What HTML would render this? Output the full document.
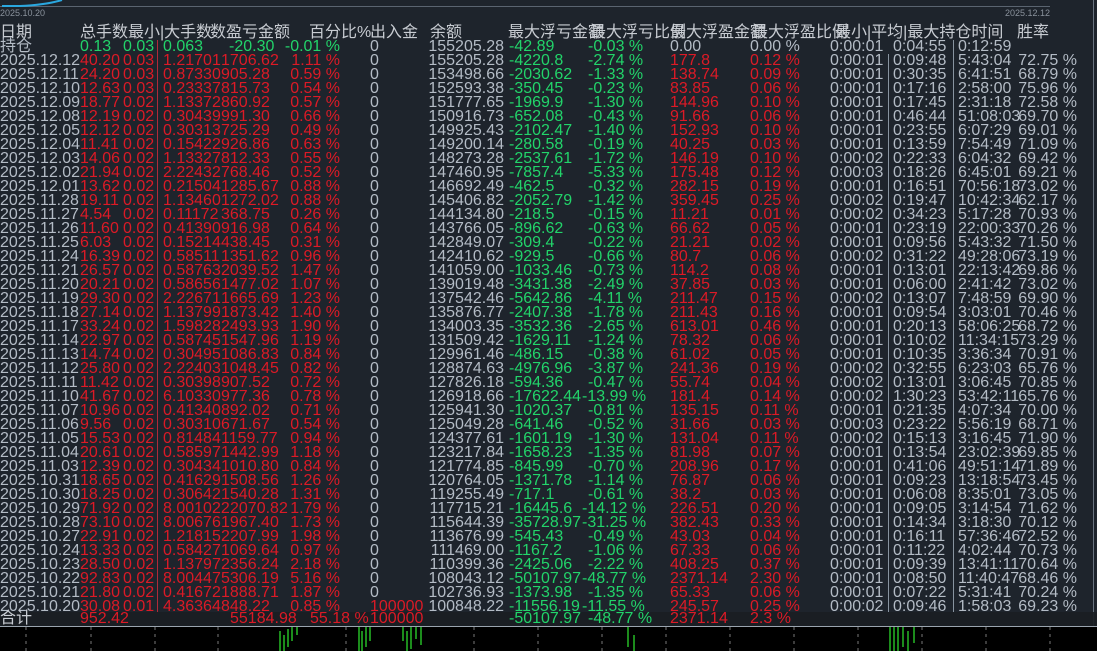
<!DOCTYPE html>
<html><head><meta charset="utf-8">
<style>
*{margin:0;padding:0;box-sizing:border-box}
body{width:1097px;height:651px;overflow:hidden;background:#1e242c;font-family:"Liberation Sans","Noto Sans CJK SC",sans-serif;font-size:16px;position:relative}
.r{position:absolute;left:0;width:1097px;height:14px;line-height:14px;white-space:nowrap}
.r span{position:absolute;top:0}
.d{left:0;color:#b4bcc6}
.t{left:80px}.m{left:123px}.c{left:163px}.p{left:221px}
.q{right:757px}.io{left:370px;color:#b4bcc6}.b{right:593px;color:#b4bcc6}
.l{left:509px;color:#22d46a}.lp{left:588px;color:#22d46a}
.g{left:670px}.gp{left:750px}
.x1{left:830px;color:#b4bcc6}.x2{left:893px;color:#b4bcc6}.x3{left:958px;color:#b4bcc6}.w{right:20px;color:#b4bcc6}
.rd span.t,.rd span.m,.rd span.c,.rd span.p,.rd span.q,.rd span.g,.rd span.gp{color:#dc1a26}
.hd span{color:#c8ccd2}
</style></head><body>
<div style="position:absolute;left:0;top:6px;width:1050px;height:1px;background:#5a6470"></div>
<svg style="position:absolute;left:0;top:0" width="80" height="8"><path d="M2 6 L20 6 Q45 5 62 0" stroke="#2aa8e0" stroke-width="2" fill="none"/></svg>
<div style="position:absolute;left:0;top:8px;font-size:9px;color:#8a929c">2025.10.20</div>
<div style="position:absolute;left:1005px;top:8px;font-size:9px;color:#8a929c">2025.12.12</div>
<div style="position:absolute;left:1093px;top:0;width:1px;height:626px;background:#6a7480"></div>
<div style="position:absolute;left:157px;top:40px;width:1px;height:572px;background:#b02a38"></div>
<div style="position:absolute;left:888px;top:54px;width:1px;height:558px;background:#8894a0"></div>
<div style="position:absolute;left:953px;top:40px;width:1px;height:572px;background:#8894a0"></div>

<div class="r hd" style="top:26px"><span style="left:0">日期</span><span style="left:80px">总手数</span><span style="left:128px">最小|大手数</span><span style="left:210px">数盈亏金额</span><span style="left:309px">百分比%</span><span style="left:370px">出入金</span><span style="left:430px">余额</span><span style="left:508px">最大浮亏金额</span><span style="left:590px">最大浮亏比例</span><span style="left:670px">最大浮盈金额</span><span style="left:752px">最大浮盈比例</span><span style="left:835px">最小|平均|最大持仓时间</span><span style="left:1017px">胜率</span></div>
<div class="r" style="top:40px;color:#22d46a"><span class="d">持仓</span><span class="t">0.13</span><span class="m">0.03</span><span class="c">0.063</span><span class="p" style="left:229px">-20.30</span><span class="q">-0.01 %</span><span class="io">0</span><span class="b">155205.28</span><span class="l">-42.89</span><span class="lp">-0.03 %</span><span class="g" style="color:#b4bcc6">0.00</span><span class="gp" style="color:#b4bcc6">0.00 %</span><span class="x1">0:00:01</span><span class="x2">0:04:55</span><span class="x3">0:12:59</span></div>

<div class="r rd" style="top:54px"><span class="d">2025.12.12</span><span class="t">40.20</span><span class="m">0.03</span><span class="c">1.21701</span><span class="p">1706.62</span><span class="q">1.11 %</span><span class="io">0</span><span class="b">155205.28</span><span class="l">-4220.8</span><span class="lp">-2.74 %</span><span class="g">177.8</span><span class="gp">0.12 %</span><span class="x1">0:00:01</span><span class="x2">0:09:48</span><span class="x3">5:43:04</span><span class="w">72.75 %</span></div>
<div class="r rd" style="top:68px"><span class="d">2025.12.11</span><span class="t">24.20</span><span class="m">0.03</span><span class="c">0.87330</span><span class="p">905.28</span><span class="q">0.59 %</span><span class="io">0</span><span class="b">153498.66</span><span class="l">-2030.62</span><span class="lp">-1.33 %</span><span class="g">138.74</span><span class="gp">0.09 %</span><span class="x1">0:00:01</span><span class="x2">0:30:35</span><span class="x3">6:41:51</span><span class="w">68.79 %</span></div>
<div class="r rd" style="top:82px"><span class="d">2025.12.10</span><span class="t">12.63</span><span class="m">0.03</span><span class="c">0.23337</span><span class="p">815.73</span><span class="q">0.54 %</span><span class="io">0</span><span class="b">152593.38</span><span class="l">-350.45</span><span class="lp">-0.23 %</span><span class="g">83.85</span><span class="gp">0.06 %</span><span class="x1">0:00:01</span><span class="x2">0:17:16</span><span class="x3">2:58:00</span><span class="w">75.96 %</span></div>
<div class="r rd" style="top:96px"><span class="d">2025.12.09</span><span class="t">18.77</span><span class="m">0.02</span><span class="c">1.13372</span><span class="p">860.92</span><span class="q">0.57 %</span><span class="io">0</span><span class="b">151777.65</span><span class="l">-1969.9</span><span class="lp">-1.30 %</span><span class="g">144.96</span><span class="gp">0.10 %</span><span class="x1">0:00:01</span><span class="x2">0:17:45</span><span class="x3">2:31:18</span><span class="w">72.58 %</span></div>
<div class="r rd" style="top:110px"><span class="d">2025.12.08</span><span class="t">12.19</span><span class="m">0.02</span><span class="c">0.30439</span><span class="p">991.30</span><span class="q">0.66 %</span><span class="io">0</span><span class="b">150916.73</span><span class="l">-652.08</span><span class="lp">-0.43 %</span><span class="g">91.66</span><span class="gp">0.06 %</span><span class="x1">0:00:01</span><span class="x2">0:46:44</span><span class="x3">51:08:03</span><span class="w">69.70 %</span></div>
<div class="r rd" style="top:124px"><span class="d">2025.12.05</span><span class="t">12.12</span><span class="m">0.02</span><span class="c">0.30313</span><span class="p">725.29</span><span class="q">0.49 %</span><span class="io">0</span><span class="b">149925.43</span><span class="l">-2102.47</span><span class="lp">-1.40 %</span><span class="g">152.93</span><span class="gp">0.10 %</span><span class="x1">0:00:01</span><span class="x2">0:23:55</span><span class="x3">6:07:29</span><span class="w">69.01 %</span></div>
<div class="r rd" style="top:138px"><span class="d">2025.12.04</span><span class="t">11.41</span><span class="m">0.02</span><span class="c">0.15422</span><span class="p">926.86</span><span class="q">0.63 %</span><span class="io">0</span><span class="b">149200.14</span><span class="l">-280.58</span><span class="lp">-0.19 %</span><span class="g">40.25</span><span class="gp">0.03 %</span><span class="x1">0:00:01</span><span class="x2">0:13:59</span><span class="x3">7:54:49</span><span class="w">71.09 %</span></div>
<div class="r rd" style="top:152px"><span class="d">2025.12.03</span><span class="t">14.06</span><span class="m">0.02</span><span class="c">1.13327</span><span class="p">812.33</span><span class="q">0.55 %</span><span class="io">0</span><span class="b">148273.28</span><span class="l">-2537.61</span><span class="lp">-1.72 %</span><span class="g">146.19</span><span class="gp">0.10 %</span><span class="x1">0:00:02</span><span class="x2">0:22:33</span><span class="x3">6:04:32</span><span class="w">69.42 %</span></div>
<div class="r rd" style="top:166px"><span class="d">2025.12.02</span><span class="t">21.94</span><span class="m">0.02</span><span class="c">2.22432</span><span class="p">768.46</span><span class="q">0.52 %</span><span class="io">0</span><span class="b">147460.95</span><span class="l">-7857.4</span><span class="lp">-5.33 %</span><span class="g">175.48</span><span class="gp">0.12 %</span><span class="x1">0:00:03</span><span class="x2">0:18:26</span><span class="x3">6:45:01</span><span class="w">69.21 %</span></div>
<div class="r rd" style="top:180px"><span class="d">2025.12.01</span><span class="t">13.62</span><span class="m">0.02</span><span class="c">0.21504</span><span class="p">1285.67</span><span class="q">0.88 %</span><span class="io">0</span><span class="b">146692.49</span><span class="l">-462.5</span><span class="lp">-0.32 %</span><span class="g">282.15</span><span class="gp">0.19 %</span><span class="x1">0:00:01</span><span class="x2">0:16:51</span><span class="x3">70:56:18</span><span class="w">73.02 %</span></div>
<div class="r rd" style="top:194px"><span class="d">2025.11.28</span><span class="t">19.11</span><span class="m">0.02</span><span class="c">1.13460</span><span class="p">1272.02</span><span class="q">0.88 %</span><span class="io">0</span><span class="b">145406.82</span><span class="l">-2052.79</span><span class="lp">-1.42 %</span><span class="g">359.45</span><span class="gp">0.25 %</span><span class="x1">0:00:02</span><span class="x2">0:19:47</span><span class="x3">10:42:34</span><span class="w">62.17 %</span></div>
<div class="r rd" style="top:208px"><span class="d">2025.11.27</span><span class="t">4.54</span><span class="m">0.02</span><span class="c">0.11172</span><span class="p">368.75</span><span class="q">0.26 %</span><span class="io">0</span><span class="b">144134.80</span><span class="l">-218.5</span><span class="lp">-0.15 %</span><span class="g">11.21</span><span class="gp">0.01 %</span><span class="x1">0:00:02</span><span class="x2">0:34:23</span><span class="x3">5:17:28</span><span class="w">70.93 %</span></div>
<div class="r rd" style="top:222px"><span class="d">2025.11.26</span><span class="t">11.60</span><span class="m">0.02</span><span class="c">0.41390</span><span class="p">916.98</span><span class="q">0.64 %</span><span class="io">0</span><span class="b">143766.05</span><span class="l">-896.62</span><span class="lp">-0.63 %</span><span class="g">66.62</span><span class="gp">0.05 %</span><span class="x1">0:00:01</span><span class="x2">0:23:19</span><span class="x3">22:00:33</span><span class="w">70.26 %</span></div>
<div class="r rd" style="top:236px"><span class="d">2025.11.25</span><span class="t">6.03</span><span class="m">0.02</span><span class="c">0.15214</span><span class="p">438.45</span><span class="q">0.31 %</span><span class="io">0</span><span class="b">142849.07</span><span class="l">-309.4</span><span class="lp">-0.22 %</span><span class="g">21.21</span><span class="gp">0.02 %</span><span class="x1">0:00:01</span><span class="x2">0:09:56</span><span class="x3">5:43:32</span><span class="w">71.50 %</span></div>
<div class="r rd" style="top:250px"><span class="d">2025.11.24</span><span class="t">16.39</span><span class="m">0.02</span><span class="c">0.58511</span><span class="p">1351.62</span><span class="q">0.96 %</span><span class="io">0</span><span class="b">142410.62</span><span class="l">-929.5</span><span class="lp">-0.66 %</span><span class="g">80.7</span><span class="gp">0.06 %</span><span class="x1">0:00:02</span><span class="x2">0:31:22</span><span class="x3">49:28:06</span><span class="w">73.19 %</span></div>
<div class="r rd" style="top:264px"><span class="d">2025.11.21</span><span class="t">26.57</span><span class="m">0.02</span><span class="c">0.58763</span><span class="p">2039.52</span><span class="q">1.47 %</span><span class="io">0</span><span class="b">141059.00</span><span class="l">-1033.46</span><span class="lp">-0.73 %</span><span class="g">114.2</span><span class="gp">0.08 %</span><span class="x1">0:00:01</span><span class="x2">0:13:01</span><span class="x3">22:13:42</span><span class="w">69.86 %</span></div>
<div class="r rd" style="top:278px"><span class="d">2025.11.20</span><span class="t">20.21</span><span class="m">0.02</span><span class="c">0.58656</span><span class="p">1477.02</span><span class="q">1.07 %</span><span class="io">0</span><span class="b">139019.48</span><span class="l">-3431.38</span><span class="lp">-2.49 %</span><span class="g">37.85</span><span class="gp">0.03 %</span><span class="x1">0:00:01</span><span class="x2">0:06:00</span><span class="x3">2:41:42</span><span class="w">73.02 %</span></div>
<div class="r rd" style="top:292px"><span class="d">2025.11.19</span><span class="t">29.30</span><span class="m">0.02</span><span class="c">2.22671</span><span class="p">1665.69</span><span class="q">1.23 %</span><span class="io">0</span><span class="b">137542.46</span><span class="l">-5642.86</span><span class="lp">-4.11 %</span><span class="g">211.47</span><span class="gp">0.15 %</span><span class="x1">0:00:02</span><span class="x2">0:13:07</span><span class="x3">7:48:59</span><span class="w">69.90 %</span></div>
<div class="r rd" style="top:306px"><span class="d">2025.11.18</span><span class="t">27.14</span><span class="m">0.02</span><span class="c">1.13799</span><span class="p">1873.42</span><span class="q">1.40 %</span><span class="io">0</span><span class="b">135876.77</span><span class="l">-2407.38</span><span class="lp">-1.78 %</span><span class="g">211.43</span><span class="gp">0.16 %</span><span class="x1">0:00:01</span><span class="x2">0:09:54</span><span class="x3">3:03:01</span><span class="w">70.46 %</span></div>
<div class="r rd" style="top:320px"><span class="d">2025.11.17</span><span class="t">33.24</span><span class="m">0.02</span><span class="c">1.59828</span><span class="p">2493.93</span><span class="q">1.90 %</span><span class="io">0</span><span class="b">134003.35</span><span class="l">-3532.36</span><span class="lp">-2.65 %</span><span class="g">613.01</span><span class="gp">0.46 %</span><span class="x1">0:00:01</span><span class="x2">0:20:13</span><span class="x3">58:06:25</span><span class="w">68.72 %</span></div>
<div class="r rd" style="top:334px"><span class="d">2025.11.14</span><span class="t">22.97</span><span class="m">0.02</span><span class="c">0.58745</span><span class="p">1547.96</span><span class="q">1.19 %</span><span class="io">0</span><span class="b">131509.42</span><span class="l">-1629.11</span><span class="lp">-1.24 %</span><span class="g">78.32</span><span class="gp">0.06 %</span><span class="x1">0:00:01</span><span class="x2">0:10:02</span><span class="x3">11:34:15</span><span class="w">73.29 %</span></div>
<div class="r rd" style="top:348px"><span class="d">2025.11.13</span><span class="t">14.74</span><span class="m">0.02</span><span class="c">0.30495</span><span class="p">1086.83</span><span class="q">0.84 %</span><span class="io">0</span><span class="b">129961.46</span><span class="l">-486.15</span><span class="lp">-0.38 %</span><span class="g">61.02</span><span class="gp">0.05 %</span><span class="x1">0:00:01</span><span class="x2">0:10:35</span><span class="x3">3:36:34</span><span class="w">70.91 %</span></div>
<div class="r rd" style="top:362px"><span class="d">2025.11.12</span><span class="t">25.80</span><span class="m">0.02</span><span class="c">2.22403</span><span class="p">1048.45</span><span class="q">0.82 %</span><span class="io">0</span><span class="b">128874.63</span><span class="l">-4976.96</span><span class="lp">-3.87 %</span><span class="g">241.36</span><span class="gp">0.19 %</span><span class="x1">0:00:02</span><span class="x2">0:32:55</span><span class="x3">6:23:03</span><span class="w">65.76 %</span></div>
<div class="r rd" style="top:376px"><span class="d">2025.11.11</span><span class="t">11.42</span><span class="m">0.02</span><span class="c">0.30398</span><span class="p">907.52</span><span class="q">0.72 %</span><span class="io">0</span><span class="b">127826.18</span><span class="l">-594.36</span><span class="lp">-0.47 %</span><span class="g">55.74</span><span class="gp">0.04 %</span><span class="x1">0:00:02</span><span class="x2">0:13:01</span><span class="x3">3:06:45</span><span class="w">70.85 %</span></div>
<div class="r rd" style="top:390px"><span class="d">2025.11.10</span><span class="t">41.67</span><span class="m">0.02</span><span class="c">6.10330</span><span class="p">977.36</span><span class="q">0.78 %</span><span class="io">0</span><span class="b">126918.66</span><span class="l">-17622.44</span><span class="lp" style="left:582px">-13.99 %</span><span class="g">181.4</span><span class="gp">0.14 %</span><span class="x1">0:00:02</span><span class="x2">1:30:23</span><span class="x3">53:42:11</span><span class="w">65.76 %</span></div>
<div class="r rd" style="top:404px"><span class="d">2025.11.07</span><span class="t">10.96</span><span class="m">0.02</span><span class="c">0.41340</span><span class="p">892.02</span><span class="q">0.71 %</span><span class="io">0</span><span class="b">125941.30</span><span class="l">-1020.37</span><span class="lp">-0.81 %</span><span class="g">135.15</span><span class="gp">0.11 %</span><span class="x1">0:00:01</span><span class="x2">0:21:35</span><span class="x3">4:07:34</span><span class="w">70.00 %</span></div>
<div class="r rd" style="top:418px"><span class="d">2025.11.06</span><span class="t">9.56</span><span class="m">0.02</span><span class="c">0.30310</span><span class="p">671.67</span><span class="q">0.54 %</span><span class="io">0</span><span class="b">125049.28</span><span class="l">-641.46</span><span class="lp">-0.52 %</span><span class="g">31.66</span><span class="gp">0.03 %</span><span class="x1">0:00:03</span><span class="x2">0:23:22</span><span class="x3">5:56:19</span><span class="w">68.71 %</span></div>
<div class="r rd" style="top:432px"><span class="d">2025.11.05</span><span class="t">15.53</span><span class="m">0.02</span><span class="c">0.81484</span><span class="p">1159.77</span><span class="q">0.94 %</span><span class="io">0</span><span class="b">124377.61</span><span class="l">-1601.19</span><span class="lp">-1.30 %</span><span class="g">131.04</span><span class="gp">0.11 %</span><span class="x1">0:00:02</span><span class="x2">0:15:13</span><span class="x3">3:16:45</span><span class="w">71.90 %</span></div>
<div class="r rd" style="top:446px"><span class="d">2025.11.04</span><span class="t">20.61</span><span class="m">0.02</span><span class="c">0.58597</span><span class="p">1442.99</span><span class="q">1.18 %</span><span class="io">0</span><span class="b">123217.84</span><span class="l">-1658.23</span><span class="lp">-1.35 %</span><span class="g">81.98</span><span class="gp">0.07 %</span><span class="x1">0:00:01</span><span class="x2">0:13:54</span><span class="x3">23:02:39</span><span class="w">69.85 %</span></div>
<div class="r rd" style="top:460px"><span class="d">2025.11.03</span><span class="t">12.39</span><span class="m">0.02</span><span class="c">0.30434</span><span class="p">1010.80</span><span class="q">0.84 %</span><span class="io">0</span><span class="b">121774.85</span><span class="l">-845.99</span><span class="lp">-0.70 %</span><span class="g">208.96</span><span class="gp">0.17 %</span><span class="x1">0:00:01</span><span class="x2">0:41:06</span><span class="x3">49:51:14</span><span class="w">71.89 %</span></div>
<div class="r rd" style="top:474px"><span class="d">2025.10.31</span><span class="t">18.65</span><span class="m">0.02</span><span class="c">0.41629</span><span class="p">1508.56</span><span class="q">1.26 %</span><span class="io">0</span><span class="b">120764.05</span><span class="l">-1371.78</span><span class="lp">-1.14 %</span><span class="g">76.87</span><span class="gp">0.06 %</span><span class="x1">0:00:01</span><span class="x2">0:09:23</span><span class="x3">13:18:54</span><span class="w">73.45 %</span></div>
<div class="r rd" style="top:488px"><span class="d">2025.10.30</span><span class="t">18.25</span><span class="m">0.02</span><span class="c">0.30642</span><span class="p">1540.28</span><span class="q">1.31 %</span><span class="io">0</span><span class="b">119255.49</span><span class="l">-717.1</span><span class="lp">-0.61 %</span><span class="g">38.2</span><span class="gp">0.03 %</span><span class="x1">0:00:01</span><span class="x2">0:06:08</span><span class="x3">8:35:01</span><span class="w">73.05 %</span></div>
<div class="r rd" style="top:502px"><span class="d">2025.10.29</span><span class="t">71.92</span><span class="m">0.02</span><span class="c">8.001022</span><span class="p" style="left:230px">2070.82</span><span class="q">1.79 %</span><span class="io">0</span><span class="b">117715.21</span><span class="l">-16445.6</span><span class="lp" style="left:582px">-14.12 %</span><span class="g">226.51</span><span class="gp">0.20 %</span><span class="x1">0:00:01</span><span class="x2">0:09:05</span><span class="x3">3:14:54</span><span class="w">71.62 %</span></div>
<div class="r rd" style="top:516px"><span class="d">2025.10.28</span><span class="t">73.10</span><span class="m">0.02</span><span class="c">8.00676</span><span class="p">1967.40</span><span class="q">1.73 %</span><span class="io">0</span><span class="b">115644.39</span><span class="l">-35728.97</span><span class="lp" style="left:582px">-31.25 %</span><span class="g">382.43</span><span class="gp">0.33 %</span><span class="x1">0:00:01</span><span class="x2">0:14:34</span><span class="x3">3:18:30</span><span class="w">70.12 %</span></div>
<div class="r rd" style="top:530px"><span class="d">2025.10.27</span><span class="t">22.91</span><span class="m">0.02</span><span class="c">1.21815</span><span class="p">2207.99</span><span class="q">1.98 %</span><span class="io">0</span><span class="b">113676.99</span><span class="l">-545.43</span><span class="lp">-0.49 %</span><span class="g">43.03</span><span class="gp">0.04 %</span><span class="x1">0:00:01</span><span class="x2">0:16:11</span><span class="x3">57:36:46</span><span class="w">72.52 %</span></div>
<div class="r rd" style="top:544px"><span class="d">2025.10.24</span><span class="t">13.33</span><span class="m">0.02</span><span class="c">0.58427</span><span class="p">1069.64</span><span class="q">0.97 %</span><span class="io">0</span><span class="b">111469.00</span><span class="l">-1167.2</span><span class="lp">-1.06 %</span><span class="g">67.33</span><span class="gp">0.06 %</span><span class="x1">0:00:01</span><span class="x2">0:11:22</span><span class="x3">4:02:44</span><span class="w">70.73 %</span></div>
<div class="r rd" style="top:558px"><span class="d">2025.10.23</span><span class="t">28.50</span><span class="m">0.02</span><span class="c">1.13797</span><span class="p">2356.24</span><span class="q">2.18 %</span><span class="io">0</span><span class="b">110399.36</span><span class="l">-2425.06</span><span class="lp">-2.22 %</span><span class="g">408.25</span><span class="gp">0.37 %</span><span class="x1">0:00:01</span><span class="x2">0:09:39</span><span class="x3">13:41:11</span><span class="w">70.64 %</span></div>
<div class="r rd" style="top:572px"><span class="d">2025.10.22</span><span class="t">92.83</span><span class="m">0.02</span><span class="c">8.00447</span><span class="p">5306.19</span><span class="q">5.16 %</span><span class="io">0</span><span class="b">108043.12</span><span class="l">-50107.97</span><span class="lp" style="left:582px">-48.77 %</span><span class="g">2371.14</span><span class="gp">2.30 %</span><span class="x1">0:00:01</span><span class="x2">0:08:50</span><span class="x3">11:40:47</span><span class="w">68.46 %</span></div>
<div class="r rd" style="top:586px"><span class="d">2025.10.21</span><span class="t">21.80</span><span class="m">0.02</span><span class="c">0.41672</span><span class="p">1888.71</span><span class="q">1.87 %</span><span class="io">0</span><span class="b">102736.93</span><span class="l">-1373.98</span><span class="lp">-1.35 %</span><span class="g">65.33</span><span class="gp">0.06 %</span><span class="x1">0:00:01</span><span class="x2">0:07:22</span><span class="x3">5:31:41</span><span class="w">70.24 %</span></div>
<div class="r rd" style="top:600px"><span class="d">2025.10.20</span><span class="t">30.08</span><span class="m">0.01</span><span class="c">4.36364</span><span class="p">848.22</span><span class="q">0.85 %</span><span class="io" style="color:#dc1a26">100000</span><span class="b">100848.22</span><span class="l">-11556.19</span><span class="lp" style="left:582px">-11.55 %</span><span class="g">245.57</span><span class="gp">0.25 %</span><span class="x1">0:00:02</span><span class="x2">0:09:46</span><span class="x3">1:58:03</span><span class="w">69.23 %</span></div>

<div style="position:absolute;left:0;top:612px;width:1097px;height:14px;background:#1a1e23;opacity:.92"></div>
<div class="r rd" style="top:612px"><span class="d" style="color:#c8ccd2">合计</span><span class="t">952.42</span><span class="p" style="left:230px">55184.98</span><span style="left:310px;color:#dc1a26">55.18 %</span><span class="io" style="color:#dc1a26">100000</span><span class="l">-50107.97</span><span class="lp">-48.77 %</span><span class="g">2371.14</span><span class="gp">2.3 %</span></div>
<div style="position:absolute;left:0;top:626px;width:1097px;height:1px;background:#9aa4ae"></div>
<div style="position:absolute;left:0;top:627px;width:1097px;height:24px;background:#000"></div>
<svg style="position:absolute;left:0;top:627px" width="1097" height="24">
<g stroke="#777" stroke-dasharray="3,4" stroke-width="1">
<line x1="26" y1="0" x2="26" y2="24"/><line x1="91" y1="0" x2="91" y2="24"/><line x1="155" y1="0" x2="155" y2="24"/><line x1="218" y1="0" x2="218" y2="24"/><line x1="346" y1="0" x2="346" y2="24"/><line x1="474" y1="0" x2="474" y2="24"/><line x1="538" y1="0" x2="538" y2="24"/><line x1="602" y1="0" x2="602" y2="24"/><line x1="666" y1="0" x2="666" y2="24"/><line x1="730" y1="0" x2="730" y2="24"/><line x1="794" y1="0" x2="794" y2="24"/><line x1="858" y1="0" x2="858" y2="24"/><line x1="922" y1="0" x2="922" y2="24"/><line x1="986" y1="0" x2="986" y2="24"/><line x1="1050" y1="0" x2="1050" y2="24"/>
</g>
<g stroke="#2ee82e" stroke-width="1.2">
<line x1="280" y1="4" x2="280" y2="24"/><line x1="284" y1="8" x2="284" y2="24"/><line x1="288" y1="2" x2="288" y2="20"/><line x1="292" y1="0" x2="292" y2="14"/><line x1="297" y1="0" x2="297" y2="8"/>
<line x1="359" y1="0" x2="359" y2="24"/><line x1="362" y1="4" x2="362" y2="24"/><line x1="366" y1="0" x2="366" y2="20"/><line x1="370" y1="0" x2="370" y2="14"/>
<line x1="403" y1="0" x2="403" y2="14"/><line x1="407" y1="4" x2="407" y2="24"/><line x1="411" y1="0" x2="411" y2="22"/><line x1="416" y1="0" x2="416" y2="12"/><line x1="421" y1="0" x2="421" y2="18"/>
<line x1="628" y1="0" x2="628" y2="20"/><line x1="634" y1="8" x2="634" y2="24"/>
<line x1="890" y1="0" x2="890" y2="24"/><line x1="894" y1="0" x2="894" y2="24"/><line x1="898" y1="0" x2="898" y2="24"/><line x1="903" y1="0" x2="903" y2="20"/><line x1="908" y1="4" x2="908" y2="24"/><line x1="914" y1="0" x2="914" y2="16"/>
</g>
</svg>
</body></html>
